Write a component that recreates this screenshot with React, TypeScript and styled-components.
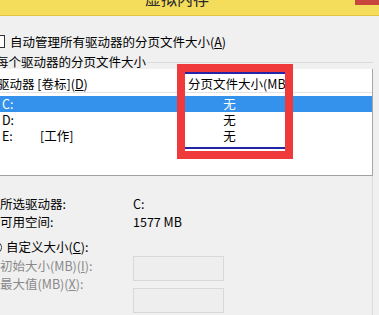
import React from "react";
import styled, { createGlobalStyle } from "styled-components";

const Global = createGlobalStyle`
  html, body { margin: 0; padding: 0; }
  body {
    background: #f0f0f0;
    font-family: "Noto Sans CJK SC", "Noto Sans", sans-serif;
    font-size: 12.5px;
    color: #000;
  }
`;

const Window = styled.div`
  position: relative;
  width: 379px;
  height: 315px;
  overflow: hidden;
  background: #f0f0f0;
`;

const TitleBar = styled.div`
  display: flex;
  align-items: flex-start;
  height: 15px;
  padding-left: 145px;
  background: #f5dd5c;
  border-bottom: 1px solid #e2c443;
  box-sizing: content-box;
  overflow: hidden;
`;

const Title = styled.div`
  font-size: 16px;
  line-height: 16px;
  margin-top: -10px;
  color: #2a2a2a;
`;

const CloseBtn = styled.div`
  margin-left: auto;
  width: 24px;
  height: 5px;
  background: #c8473c;
`;

const CheckRow = styled.div`
  display: flex;
  align-items: center;
  height: 13px;
  margin-top: 19px;
  line-height: 13px;
`;

const CheckBox = styled.div`
  width: 11px;
  height: 11px;
  margin-left: -8px;
  margin-right: 5px;
  border: 1px solid #333;
  background: #fff;
`;

const Radio = styled.div`
  width: 11px;
  height: 11px;
  margin-left: -11px;
  margin-right: 4px;
  border: 1px solid #333;
  border-radius: 50%;
  background: #fff;
`;

const U = styled.span`
  text-decoration: underline;
  text-underline-offset: 1px;
`;

const Group = styled.div`
  margin-left: -4px;
  margin-top: 7px;
  width: 377px;
`;

const GroupHeader = styled.div`
  display: flex;
  align-items: center;
  height: 14px;
  line-height: 14px;
`;

const GroupLine = styled.div`
  flex: 1;
  height: 1px;
  margin-left: 2px;
  background: #dcdcdc;
`;

const GroupBody = styled.div`
  border-right: 1px solid #dcdcdc;
  height: 260px;
`;

const ListView = styled.div`
  margin-right: -1px;
  background: #fff;
  border-right: 1px solid #a6a6a6;
  border-bottom: 1px solid #a0a0a0;
`;

const ListHeader = styled.div`
  display: grid;
  grid-template-columns: 192px 1fr;
  height: 24px;
  box-sizing: border-box;
  padding-top: 8px;
  line-height: 14px;
  border-bottom: 1px solid #e3e3e3;
  white-space: nowrap;
`;

const HeaderCell = styled.div<{ $pad?: number }>`
  padding-left: ${(p) => p.$pad ?? 0}px;
  overflow: hidden;
`;

const ListBody = styled.div`
  height: 82px;
  padding-top: 3px;
  box-sizing: border-box;
`;

const Row = styled.div<{ $selected?: boolean }>`
  display: grid;
  grid-template-columns: 192px 83px 1fr;
  height: 16px;
  line-height: 16px;
  background: ${(p) => (p.$selected ? "#3592ec" : "transparent")};
  color: ${(p) => (p.$selected ? "#fff" : "#000")};
`;

const DriveCell = styled.div`
  display: flex;
  padding-left: 6px;
`;

const Letter = styled.span`
  width: 38px;
`;

const SizeCell = styled.div`
  text-align: center;
`;

const InfoGrid = styled.div`
  display: grid;
  grid-template-columns: 133px 1fr;
  row-gap: 4px;
  margin-top: 21px;
  padding-left: 4px;
  line-height: 14px;
`;

const RadioRow = styled.div`
  display: flex;
  align-items: center;
  height: 14px;
  line-height: 14px;
  margin-top: 11px;
  padding-left: 4px;
`;

const Fields = styled.div`
  display: grid;
  grid-template-columns: 133px 91px;
  margin-top: 2px;
  padding-left: 4px;
`;

const LabelCol = styled.div`
  display: flex;
  flex-direction: column;
  gap: 4px;
  padding-top: 3px;
  line-height: 14px;
  color: #8a8a8a;
`;

const InputCol = styled.div`
  display: flex;
  flex-direction: column;
  gap: 7px;
`;

const Input = styled.div`
  height: 25px;
  box-sizing: border-box;
  border: 1px solid #d8d8d8;
  background: #eeeeee;
`;

const Annotation = styled.div`
  position: absolute;
  left: 177px;
  top: 64px;
  width: 116px;
  height: 95px;
  box-sizing: border-box;
  border: 8px solid #f0393b;
  display: flex;
  flex-direction: column;
  justify-content: space-between;
  padding-bottom: 2px;
`;

const BlueLine = styled.div`
  height: 2px;
  background: #2424a6;
`;

const drives = [
  { letter: "C:", label: "", size: "无", selected: true },
  { letter: "D:", label: "", size: "无" },
  { letter: "E:", label: "[工作]", size: "无" },
];

export default function App() {
  return (
    <Window>
      <Global />
      <TitleBar>
        <Title>虚拟内存</Title>
        <CloseBtn />
      </TitleBar>
      <CheckRow>
        <CheckBox />
        <span>
          自动管理所有驱动器的分页文件大小(<U>A</U>)
        </span>
      </CheckRow>
      <Group>
        <GroupHeader>
          <span>每个驱动器的分页文件大小</span>
          <GroupLine />
        </GroupHeader>
        <GroupBody>
          <ListView>
            <ListHeader>
              <HeaderCell $pad={1}>
                驱动器 [卷标](<U>D</U>)
              </HeaderCell>
              <HeaderCell>分页文件大小(MB)</HeaderCell>
            </ListHeader>
            <ListBody>
              {drives.map((d) => (
                <Row key={d.letter} $selected={d.selected}>
                  <DriveCell>
                    <Letter>{d.letter}</Letter>
                    <span>{d.label}</span>
                  </DriveCell>
                  <SizeCell>{d.size}</SizeCell>
                  <div />
                </Row>
              ))}
            </ListBody>
          </ListView>
          <InfoGrid>
            <span>所选驱动器:</span>
            <span>C:</span>
            <span>可用空间:</span>
            <span>1577 MB</span>
          </InfoGrid>
          <RadioRow>
            <Radio />
            <span>
              自定义大小(<U>C</U>):
            </span>
          </RadioRow>
          <Fields>
            <LabelCol>
              <span>
                初始大小(MB)(<U>I</U>):
              </span>
              <span>
                最大值(MB)(<U>X</U>):
              </span>
            </LabelCol>
            <InputCol>
              <Input />
              <Input />
            </InputCol>
          </Fields>
        </GroupBody>
      </Group>
      <Annotation>
        <BlueLine />
        <BlueLine />
      </Annotation>
    </Window>
  );
}
